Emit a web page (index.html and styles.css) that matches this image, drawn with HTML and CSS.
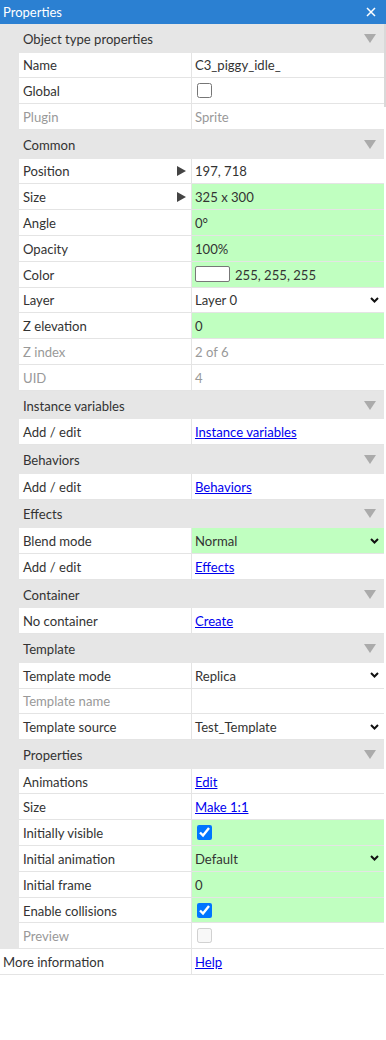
FILE: index.html
```html
<!DOCTYPE html>
<html lang="en">

<head>
    <meta charset="UTF-8">
    <meta name="viewport" content="width=device-width, initial-scale=1.0">
    <title>Properties</title>
    <link rel="stylesheet" href="styles.css">
</head>

<body>
    <div class="titlebar">
        <span>Properties</span>
        <svg class="close" width="10" height="10" viewBox="0 0 10 10">
            <path d="M1 1 L9 9 M9 1 L1 9" stroke="#fff" stroke-width="1.5" fill="none" />
        </svg>
    </div>

    <div class="sheet">
        <div class="list">
            <div class="section"><span>Object type properties</span><i class="fold"></i></div>
            <div class="row"><div class="key">Name</div><div class="val">C3_piggy_idle_</div></div>
            <div class="row"><div class="key">Global</div><div class="val"><input type="checkbox" class="check"></div></div>
            <div class="row off"><div class="key">Plugin</div><div class="val">Sprite</div></div>

            <div class="section"><span>Common</span><i class="fold"></i></div>
            <div class="row"><div class="key">Position<i class="expand"></i></div><div class="val">197, 718</div></div>
            <div class="row"><div class="key">Size<i class="expand"></i></div><div class="val green">325 x 300</div></div>
            <div class="row"><div class="key">Angle</div><div class="val green">0°</div></div>
            <div class="row"><div class="key">Opacity</div><div class="val green">100%</div></div>
            <div class="row"><div class="key">Color</div><div class="val green"><span class="swatch"></span>255, 255, 255</div></div>
            <div class="row"><div class="key">Layer</div><div class="val pick">Layer 0<svg class="chev" width="9" height="6" viewBox="0 0 9 6"><path d="M1 1 L4.5 4.5 L8 1" /></svg></div></div>
            <div class="row"><div class="key">Z elevation</div><div class="val green">0</div></div>
            <div class="row off"><div class="key">Z index</div><div class="val">2 of 6</div></div>
            <div class="row off"><div class="key">UID</div><div class="val">4</div></div>

            <div class="section"><span>Instance variables</span><i class="fold"></i></div>
            <div class="row"><div class="key">Add / edit</div><div class="val"><a href="#">Instance variables</a></div></div>

            <div class="section"><span>Behaviors</span><i class="fold"></i></div>
            <div class="row"><div class="key">Add / edit</div><div class="val"><a href="#">Behaviors</a></div></div>

            <div class="section"><span>Effects</span><i class="fold"></i></div>
            <div class="row"><div class="key">Blend mode</div><div class="val green pick">Normal<svg class="chev" width="9" height="6" viewBox="0 0 9 6"><path d="M1 1 L4.5 4.5 L8 1" /></svg></div></div>
            <div class="row"><div class="key">Add / edit</div><div class="val"><a href="#">Effects</a></div></div>

            <div class="section"><span>Container</span><i class="fold"></i></div>
            <div class="row"><div class="key">No container</div><div class="val"><a href="#">Create</a></div></div>

            <div class="section"><span>Template</span><i class="fold"></i></div>
            <div class="row"><div class="key">Template mode</div><div class="val pick">Replica<svg class="chev" width="9" height="6" viewBox="0 0 9 6"><path d="M1 1 L4.5 4.5 L8 1" /></svg></div></div>
            <div class="row off"><div class="key">Template name</div><div class="val"></div></div>
            <div class="row"><div class="key">Template source</div><div class="val pick">Test_Template<svg class="chev" width="9" height="6" viewBox="0 0 9 6"><path d="M1 1 L4.5 4.5 L8 1" /></svg></div></div>

            <div class="section"><span>Properties</span><i class="fold"></i></div>
            <div class="row"><div class="key">Animations</div><div class="val"><a href="#">Edit</a></div></div>
            <div class="row"><div class="key">Size</div><div class="val"><a href="#">Make 1:1</a></div></div>
            <div class="row"><div class="key">Initially visible</div><div class="val green"><input type="checkbox" class="check" checked></div></div>
            <div class="row"><div class="key">Initial animation</div><div class="val green pick">Default<svg class="chev" width="9" height="6" viewBox="0 0 9 6"><path d="M1 1 L4.5 4.5 L8 1" /></svg></div></div>
            <div class="row"><div class="key">Initial frame</div><div class="val green">0</div></div>
            <div class="row"><div class="key">Enable collisions</div><div class="val green"><input type="checkbox" class="check" checked></div></div>
            <div class="row off"><div class="key">Preview</div><div class="val"><input type="checkbox" class="check" disabled></div></div>

            <div class="row more"><div class="key">More information</div><div class="val"><a href="#">Help</a></div></div>
        </div>
        <div class="scrollbar"><div class="thumb"></div></div>
    </div>
</body>

</html>
```

FILE: styles.css
```css
body {
    font-family: Lato, "Open Sans", sans-serif;
    font-size: 13.1px;
    color: #333;
    margin: 0;
    padding: 0;
    background-color: #fff;
}

.titlebar {
    height: 24px;
    background-color: #2b80d2;
    color: #fff;
    font-size: 13px;
    display: flex;
    align-items: center;
    justify-content: space-between;
    padding: 0 10px 0 3px;
}

.close {
    display: block;
}

.sheet {
    display: flex;
    align-items: flex-start;
}

.list {
    width: 384px;
    background-color: #e6e6e6;
}

.scrollbar {
    width: 2px;
}

.thumb {
    height: 83px;
    background-color: #d9d9d9;
}

.section {
    height: 28.6px;
    box-sizing: border-box;
    padding: 1px 8px 0 23px;
    display: flex;
    align-items: center;
    justify-content: space-between;
}

.fold {
    width: 0;
    height: 0;
    margin-top: -1px;
    border-left: 6.5px solid transparent;
    border-right: 6.5px solid transparent;
    border-top: 9px solid #ababab;
}

.row {
    margin-left: 19px;
    height: 25.8px;
    box-sizing: border-box;
    display: grid;
    grid-template-columns: 173px 1fr;
    background-color: #fff;
    border-bottom: 1px solid #e4e4e4;
}

.row.more {
    margin-left: 0;
    grid-template-columns: 192px 1fr;
}

.key {
    padding: 1px 5px 0 4px;
    border-right: 1px solid #e4e4e4;
    display: flex;
    align-items: center;
    justify-content: space-between;
}

.more .key {
    padding-left: 3px;
}

.val {
    padding: 1px 5px 0 3px;
    display: flex;
    align-items: center;
}

.off .key,
.off .val {
    color: #999;
}

.green {
    background-color: #c0ffc0;
}

.pick {
    justify-content: space-between;
}

.chev {
    display: block;
    margin-top: -1px;
}

.chev path {
    stroke: #111;
    stroke-width: 2;
    fill: none;
}

.expand {
    width: 0;
    height: 0;
    margin-top: -1px;
    border-top: 5.5px solid transparent;
    border-bottom: 5.5px solid transparent;
    border-left: 9px solid #444;
}

.swatch {
    width: 33px;
    height: 14px;
    border: 1px solid #777;
    border-radius: 2px;
    background-color: #fff;
    margin: -1px 5px 0 0;
}

.check {
    width: 15px;
    height: 15px;
    margin: -1px 0 0 2px;
}

a {
    color: #0000ee;
}
```
